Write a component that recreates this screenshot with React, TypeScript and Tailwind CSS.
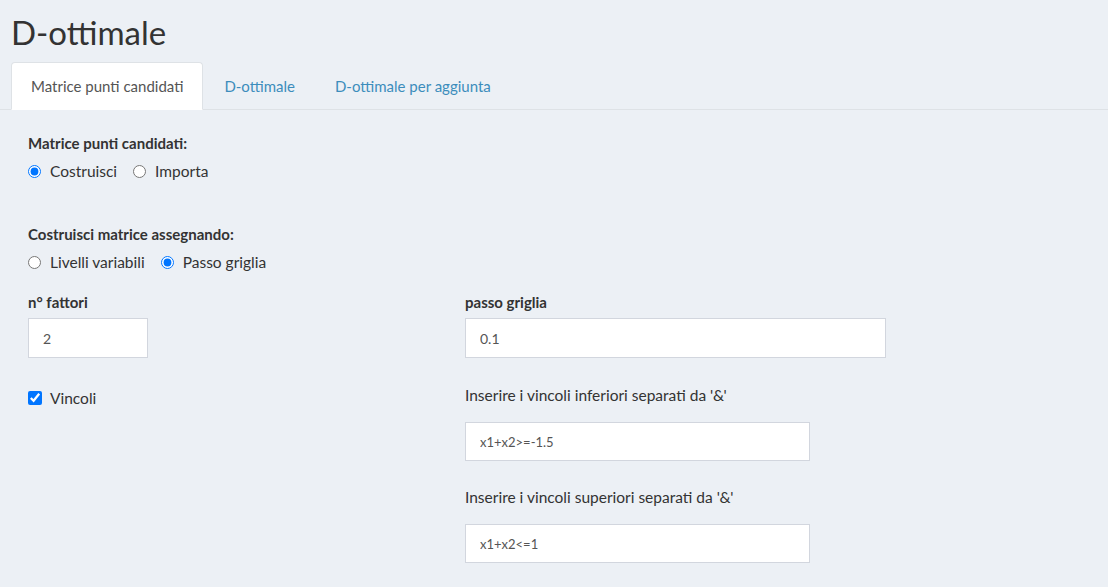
import { useState } from "react"

const tabs = ["Matrice punti candidati", "D-ottimale", "D-ottimale per aggiunta"]

function Radio({ label, checked, onChange }: { label: string; checked: boolean; onChange: () => void }) {
  return (
    <label className="flex items-center gap-[9px] cursor-pointer text-[15.5px]">
      <input type="radio" checked={checked} onChange={onChange} className="m-0 w-[13px] h-[13px]" />
      <span>{label}</span>
    </label>
  )
}

export default function App() {
  const [tab, setTab] = useState(0)
  const [source, setSource] = useState("costruisci")
  const [mode, setMode] = useState("passo")
  const [vincoli, setVincoli] = useState(true)

  return (
    <div
      className="min-h-[587px] w-full bg-[#ecf0f5] text-[#333] text-[15px] leading-[20px]"
      style={{ fontFamily: "Lato, 'Open Sans', sans-serif" }}
    >
      <h1 className="px-[11px] pt-[12px] pb-[10px] text-[33px] leading-[40px] text-[#333]">D-ottimale</h1>

      {/* Tabs */}
      <div className="flex pl-[11px] border-b border-[#dee2e6] h-[48px]">
        {tabs.map((t, i) => (
          <button
            key={t}
            onClick={() => setTab(i)}
            className={
              i === tab
                ? "h-[48px] px-[19px] mr-[2px] bg-white border border-[#dee2e6] border-b-white rounded-t-[4px] text-[#555]"
                : "h-[47px] px-[18px] mr-[2px] text-[#3c8dbc] border border-transparent"
            }
          >
            {t}
          </button>
        ))}
      </div>

      {/* Content */}
      <div className="px-[28px] pt-[23px]">
        <div className="font-bold">Matrice punti candidati:</div>
        <div className="flex gap-[16px] mt-[8px]">
          <Radio label="Costruisci" checked={source === "costruisci"} onChange={() => setSource("costruisci")} />
          <Radio label="Importa" checked={source === "importa"} onChange={() => setSource("importa")} />
        </div>

        <div className="font-bold mt-[43px]">Costruisci matrice assegnando:</div>
        <div className="flex gap-[16px] mt-[8px]">
          <Radio label="Livelli variabili" checked={mode === "livelli"} onChange={() => setMode("livelli")} />
          <Radio label="Passo griglia" checked={mode === "passo"} onChange={() => setMode("passo")} />
        </div>

        <div className="grid grid-cols-[437px_1fr] mt-[20px]">
          {/* left column */}
          <div>
            <div className="font-bold">n° fattori</div>
            <input
              defaultValue="2"
              className="block mt-[6px] w-[120px] h-[40px] px-[14px] bg-white border border-[#d2d6de] outline-none text-[#555] text-[14px]"
            />
            <label className="flex items-center gap-[8px] mt-[30px] text-[15.5px]">
              <input
                type="checkbox"
                checked={vincoli}
                onChange={() => setVincoli(!vincoli)}
                className="m-0 w-[14px] h-[14px]"
              />
              <span>Vincoli</span>
            </label>
          </div>

          {/* right column */}
          <div>
            <div className="font-bold">passo griglia</div>
            <input
              defaultValue="0.1"
              className="block mt-[6px] w-[421px] h-[40px] px-[14px] bg-white border border-[#d2d6de] outline-none text-[#555] text-[14px]"
            />
            {vincoli && (
              <>
                <div className="mt-[27px] text-[15.5px]">Inserire i vincoli inferiori separati da '&amp;'</div>
                <input
                  defaultValue="x1+x2>=-1.5"
                  className="block mt-[17px] w-[345px] h-[39px] px-[14px] bg-white border border-[#d2d6de] outline-none text-[#555] text-[13px]"
                />
                <div className="mt-[26px] text-[15.5px]">Inserire i vincoli superiori separati da '&amp;'</div>
                <input
                  defaultValue="x1+x2<=1"
                  className="block mt-[17px] w-[345px] h-[39px] px-[14px] bg-white border border-[#d2d6de] outline-none text-[#555] text-[13px]"
                />
              </>
            )}
          </div>
        </div>
      </div>
    </div>
  )
}
